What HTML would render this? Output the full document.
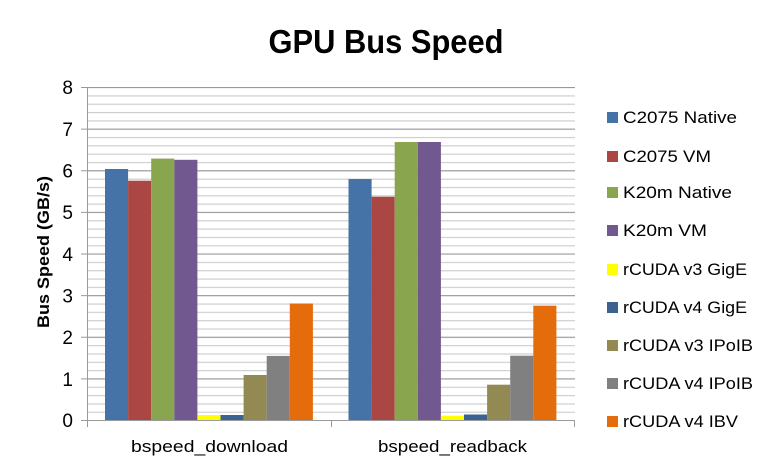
<!DOCTYPE html>
<html><head><meta charset="utf-8"><style>
html,body{margin:0;padding:0;background:#fff;}
svg{display:block;font-family:"Liberation Sans",sans-serif;}
</style></head><body>
<svg width="775" height="472" viewBox="0 0 775 472" xmlns="http://www.w3.org/2000/svg">
<defs>
<pattern id="g" x="0" y="87" width="10" height="8.325" patternUnits="userSpaceOnUse">
<rect x="0" y="0" width="10" height="1.2" fill="#cfcfcf"/>
</pattern>
</defs>
<rect width="775" height="472" fill="#fff"/>
<text x="386" y="53" font-size="33" font-weight="bold" text-anchor="middle" textLength="235" lengthAdjust="spacingAndGlyphs" fill="#000">GPU Bus Speed</text>
<rect x="88" y="87" width="487" height="333" fill="url(#g)"/>
<g stroke="#9a9a9a" stroke-width="1">
<line x1="81" y1="87.5" x2="575" y2="87.5"/>
<line x1="81" y1="129.1" x2="575" y2="129.1"/>
<line x1="81" y1="170.8" x2="575" y2="170.8"/>
<line x1="81" y1="212.4" x2="575" y2="212.4"/>
<line x1="81" y1="254" x2="575" y2="254"/>
<line x1="81" y1="295.6" x2="575" y2="295.6"/>
<line x1="81" y1="337.3" x2="575" y2="337.3"/>
<line x1="81" y1="378.9" x2="575" y2="378.9"/>
<line x1="81" y1="420.5" x2="575" y2="420.5"/>
<line x1="87.5" y1="87" x2="87.5" y2="427"/>
<line x1="331.5" y1="420" x2="331.5" y2="427"/>
<line x1="574.5" y1="420" x2="574.5" y2="427"/>
</g>
<g font-size="19" fill="#000" text-anchor="end">
<text x="73" y="94">8</text><text x="73" y="136">7</text><text x="73" y="177.5">6</text><text x="73" y="219">5</text><text x="73" y="261">4</text><text x="73" y="302.5">3</text><text x="73" y="344">2</text><text x="73" y="386">1</text><text x="73" y="427">0</text>
</g>
<text transform="translate(49,252) rotate(-90)" font-size="17" font-weight="bold" text-anchor="middle" textLength="152" lengthAdjust="spacingAndGlyphs" fill="#000">Bus Speed (GB/s)</text>
<g>
<rect x="105" y="169" width="23.1" height="251" fill="#4572a7"/>
<rect x="128.1" y="180.7" width="23.1" height="239.3" fill="#aa4643"/>
<rect x="151.2" y="158.6" width="23.1" height="261.4" fill="#89a54e"/>
<rect x="174.3" y="159.8" width="23.1" height="260.2" fill="#71588f"/>
<rect x="197.4" y="415" width="23.1" height="5" fill="#ffff00"/>
<rect x="220.5" y="415" width="23.1" height="5" fill="#3b6293"/>
<rect x="243.6" y="375" width="23.1" height="45" fill="#938953"/>
<rect x="266.7" y="355.9" width="23.1" height="64.1" fill="#808080"/>
<rect x="289.8" y="303.5" width="23.1" height="116.5" fill="#e46c0a"/>

<rect x="348.5" y="179" width="23.1" height="241" fill="#4572a7"/>
<rect x="371.6" y="196.7" width="23.1" height="223.3" fill="#aa4643"/>
<rect x="394.7" y="142" width="23.1" height="278" fill="#89a54e"/>
<rect x="417.8" y="142" width="23.1" height="278" fill="#71588f"/>
<rect x="440.9" y="415.7" width="23.1" height="4.3" fill="#ffff00"/>
<rect x="464" y="414.5" width="23.1" height="5.5" fill="#3b6293"/>
<rect x="487.1" y="384.7" width="23.1" height="35.3" fill="#938953"/>
<rect x="510.2" y="355.7" width="23.1" height="64.3" fill="#808080"/>
<rect x="533.3" y="305.7" width="23.1" height="114.3" fill="#e46c0a"/>
</g>
<g font-size="17" fill="#000">
<text x="131" y="452" textLength="157" lengthAdjust="spacingAndGlyphs">bspeed_download</text>
<text x="378" y="452" textLength="149" lengthAdjust="spacingAndGlyphs">bspeed_readback</text>
</g>
<g font-size="17" fill="#000">
<rect x="607" y="112" width="11" height="11" fill="#4572a7"/><text x="623" y="123" textLength="114" lengthAdjust="spacingAndGlyphs">C2075 Native</text>
<rect x="607" y="151" width="11" height="11" fill="#aa4643"/><text x="623" y="162" textLength="88" lengthAdjust="spacingAndGlyphs">C2075 VM</text>
<rect x="607" y="187" width="11" height="11" fill="#89a54e"/><text x="623" y="198" textLength="109" lengthAdjust="spacingAndGlyphs">K20m Native</text>
<rect x="607" y="225" width="11" height="11" fill="#71588f"/><text x="623" y="236" textLength="84" lengthAdjust="spacingAndGlyphs">K20m VM</text>
<rect x="607" y="264" width="11" height="11" fill="#ffff00"/><text x="623" y="275" textLength="124" lengthAdjust="spacingAndGlyphs">rCUDA v3 GigE</text>
<rect x="607" y="302" width="11" height="11" fill="#3b6293"/><text x="623" y="313" textLength="124" lengthAdjust="spacingAndGlyphs">rCUDA v4 GigE</text>
<rect x="607" y="340" width="11" height="11" fill="#938953"/><text x="623" y="351" textLength="130" lengthAdjust="spacingAndGlyphs">rCUDA v3 IPoIB</text>
<rect x="607" y="378" width="11" height="11" fill="#808080"/><text x="623" y="389" textLength="130" lengthAdjust="spacingAndGlyphs">rCUDA v4 IPoIB</text>
<rect x="607" y="416" width="11" height="11" fill="#e46c0a"/><text x="623" y="427" textLength="115" lengthAdjust="spacingAndGlyphs">rCUDA v4 IBV</text>
</g>
</svg>
</body></html>
